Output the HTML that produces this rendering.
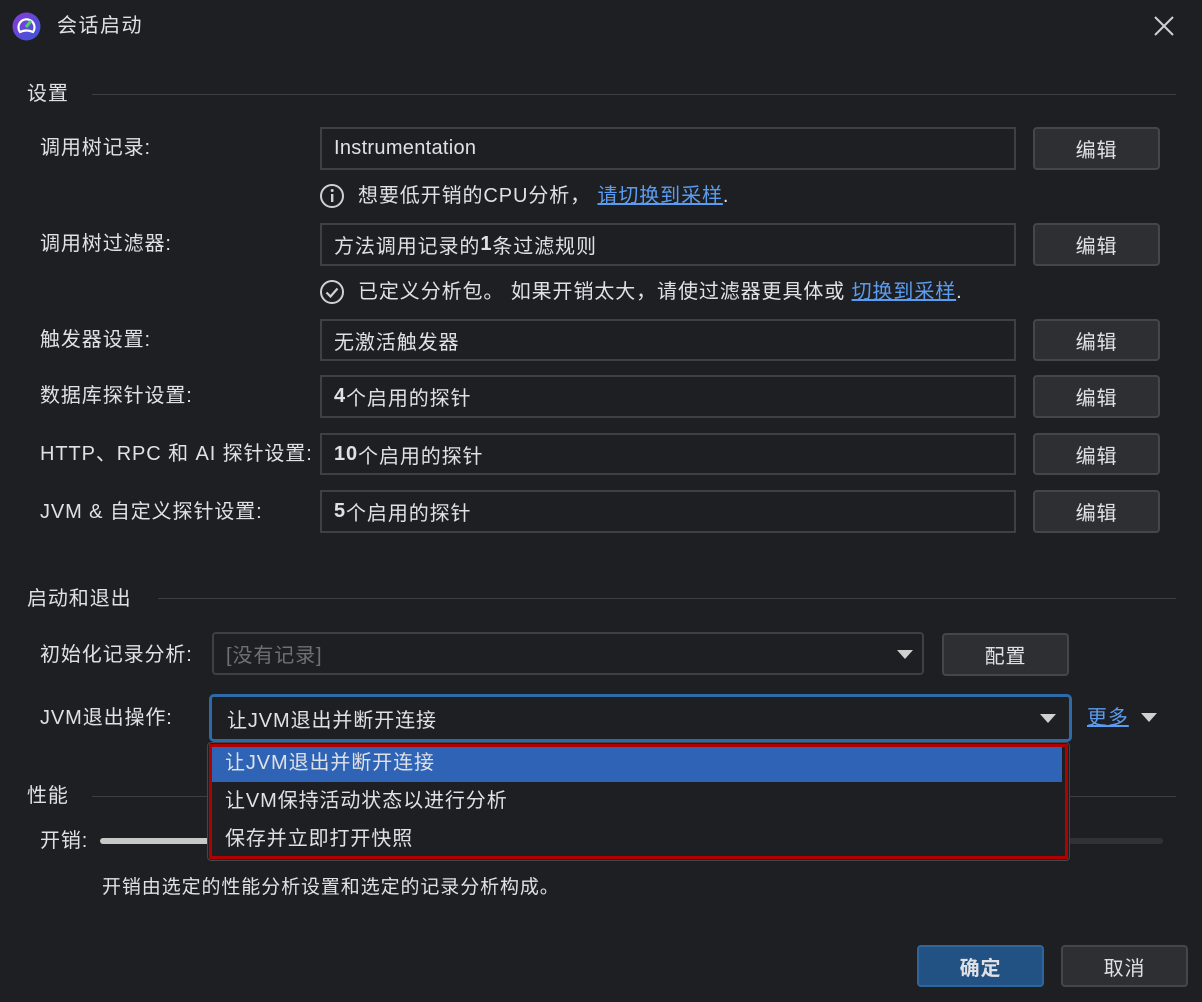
<!DOCTYPE html>
<html><head><meta charset="utf-8"><style>
*{margin:0;padding:0;box-sizing:border-box}
body{width:1202px;height:1002px;background:#1e1f22;color:#dfe1e5;font-family:"Liberation Sans","Noto Sans CJK SC",sans-serif;font-size:20px;letter-spacing:0.9px;position:relative;overflow:hidden}
.a{position:absolute;white-space:nowrap}
.t{line-height:24px}
.f{position:absolute;border:2px solid #3f4044;background:#1e1f22;padding-left:12px;display:flex;align-items:center}
.b{position:absolute;border:2px solid #45464a;background:#2e2f33;border-radius:4px;display:flex;align-items:center;justify-content:center}
.ln{position:absolute;height:1px;background:#3d3e42}
.lk{color:#5a9cf0;text-decoration:underline}
.tri{position:absolute;width:0;height:0;border-left:8px solid transparent;border-right:8px solid transparent;border-top:9px solid #d0d0d0}
</style></head><body>
<svg class="a" style="left:12px;top:12px" width="29" height="29" viewBox="0 0 29 29"><defs><linearGradient id="g" x1="0" y1="0" x2="1" y2="1"><stop offset="0" stop-color="#8a3bd6"/><stop offset="1" stop-color="#3557d8"/></linearGradient></defs><circle cx="14.5" cy="14.5" r="14" fill="url(#g)"/><path d="M8 20 A8 8 0 1 1 21 20 Q14.5 17 8 20Z" fill="none" stroke="#fff" stroke-width="2.2"/><path d="M14 15 L19 9" stroke="#4fd06a" stroke-width="3"/></svg>
<div class="a t" style="left:57px;top:14px;letter-spacing:1.5px">会话启动</div>
<svg class="a" style="left:1154px;top:16px" width="20" height="20"><path d="M1 1L19 19M19 1L1 19" stroke="#d0d0d0" stroke-width="2"/></svg>

<div class="a t" style="left:27px;top:82px">设置</div><div class="ln" style="left:92px;right:26px;top:94px"></div>

<div class="a t" style="left:40px;top:136px">调用树记录:</div>
<div class="f" style="left:320px;top:127px;width:696px;height:43px;letter-spacing:0.3px">Instrumentation</div>
<div class="b" style="left:1033px;top:127px;width:127px;height:43px">编辑</div>
<svg class="a" style="left:319px;top:183px" width="26" height="26"><circle cx="13" cy="13" r="11" fill="none" stroke="#d0d0d0" stroke-width="2"/><rect x="12" y="11" width="2.4" height="8" fill="#d0d0d0"/><circle cx="13.2" cy="7.5" r="1.5" fill="#d0d0d0"/></svg>
<div class="a t" style="left:358px;top:184px">想要低开销的CPU分析， <span class="lk">请切换到采样</span>.</div>

<div class="a t" style="left:40px;top:232px">调用树过滤器:</div>
<div class="f" style="left:320px;top:223px;width:696px;height:43px">方法调用记录的<b>1</b>条过滤规则</div>
<div class="b" style="left:1033px;top:223px;width:127px;height:43px">编辑</div>
<svg class="a" style="left:319px;top:279px" width="26" height="26"><circle cx="13" cy="13" r="11" fill="none" stroke="#d0d0d0" stroke-width="2"/><path d="M7.5 13.5L11.5 17.5L18.5 9.5" fill="none" stroke="#d0d0d0" stroke-width="2.2"/></svg>
<div class="a t" style="left:358px;top:280px">已定义分析包。 如果开销太大，请使过滤器更具体或 <span class="lk">切换到采样</span>.</div>

<div class="a t" style="left:40px;top:328px">触发器设置:</div>
<div class="f" style="left:320px;top:319px;width:696px;height:42px">无激活触发器</div>
<div class="b" style="left:1033px;top:319px;width:127px;height:42px">编辑</div>

<div class="a t" style="left:40px;top:384px">数据库探针设置:</div>
<div class="f" style="left:320px;top:375px;width:696px;height:43px"><b>4</b>个启用的探针</div>
<div class="b" style="left:1033px;top:375px;width:127px;height:43px">编辑</div>

<div class="a t" style="left:40px;top:442px">HTTP、RPC 和 AI 探针设置:</div>
<div class="f" style="left:320px;top:433px;width:696px;height:42px"><b>10</b>个启用的探针</div>
<div class="b" style="left:1033px;top:433px;width:127px;height:42px">编辑</div>

<div class="a t" style="left:40px;top:500px">JVM &amp; 自定义探针设置:</div>
<div class="f" style="left:320px;top:490px;width:696px;height:43px"><b>5</b>个启用的探针</div>
<div class="b" style="left:1033px;top:490px;width:127px;height:43px">编辑</div>

<div class="a t" style="left:27px;top:587px">启动和退出</div><div class="ln" style="left:158px;right:26px;top:598px"></div>

<div class="a t" style="left:40px;top:643px">初始化记录分析:</div>
<div class="f" style="left:212px;top:632px;width:712px;height:43px;border-radius:4px;color:#6e7075">[没有记录]</div>
<div class="tri" style="left:897px;top:650px"></div>
<div class="b" style="left:942px;top:633px;width:127px;height:43px">配置</div>

<div class="a t" style="left:40px;top:706px">JVM退出操作:</div>
<div class="f" style="left:209px;top:694px;width:863px;height:48px;border:3px solid #2d6aa8;border-radius:5px;padding-left:15px">让JVM退出并断开连接</div>
<div class="tri" style="left:1040px;top:714px"></div>
<div class="a t lk" style="left:1087px;top:706px">更多</div>
<div class="tri" style="left:1141px;top:713px"></div>

<div class="a t" style="left:27px;top:784px">性能</div><div class="ln" style="left:92px;right:26px;top:796px"></div>
<div class="a t" style="left:40px;top:829px">开销:</div>
<div class="a" style="left:100px;top:838px;width:1063px;height:6px;border-radius:3px;background:#313236"></div>
<div class="a" style="left:100px;top:838px;width:120px;height:6px;border-radius:3px;background:#c8c8c8"></div>
<div class="a t" style="left:102px;top:876px;font-size:19px">开销由选定的性能分析设置和选定的记录分析构成。</div>

<div class="a" style="left:207px;top:742px;width:863px;height:119px;background:#1e1f22;border:1px solid #45464a;border-radius:4px"></div>
<div class="a" style="left:209px;top:744px;width:859px;height:115px;border:3px solid #b00000"></div>
<div class="a" style="left:212px;top:747px;width:850px;height:35px;background:#2f63b6"></div>
<div class="a t" style="left:225px;top:751px">让JVM退出并断开连接</div>
<div class="a t" style="left:225px;top:789px">让VM保持活动状态以进行分析</div>
<div class="a t" style="left:225px;top:827px">保存并立即打开快照</div>

<div class="b" style="left:917px;top:945px;width:127px;height:42px;background:#215283;border-color:#2f659a;font-weight:bold">确定</div>
<div class="b" style="left:1061px;top:945px;width:127px;height:42px">取消</div>
</body></html>
